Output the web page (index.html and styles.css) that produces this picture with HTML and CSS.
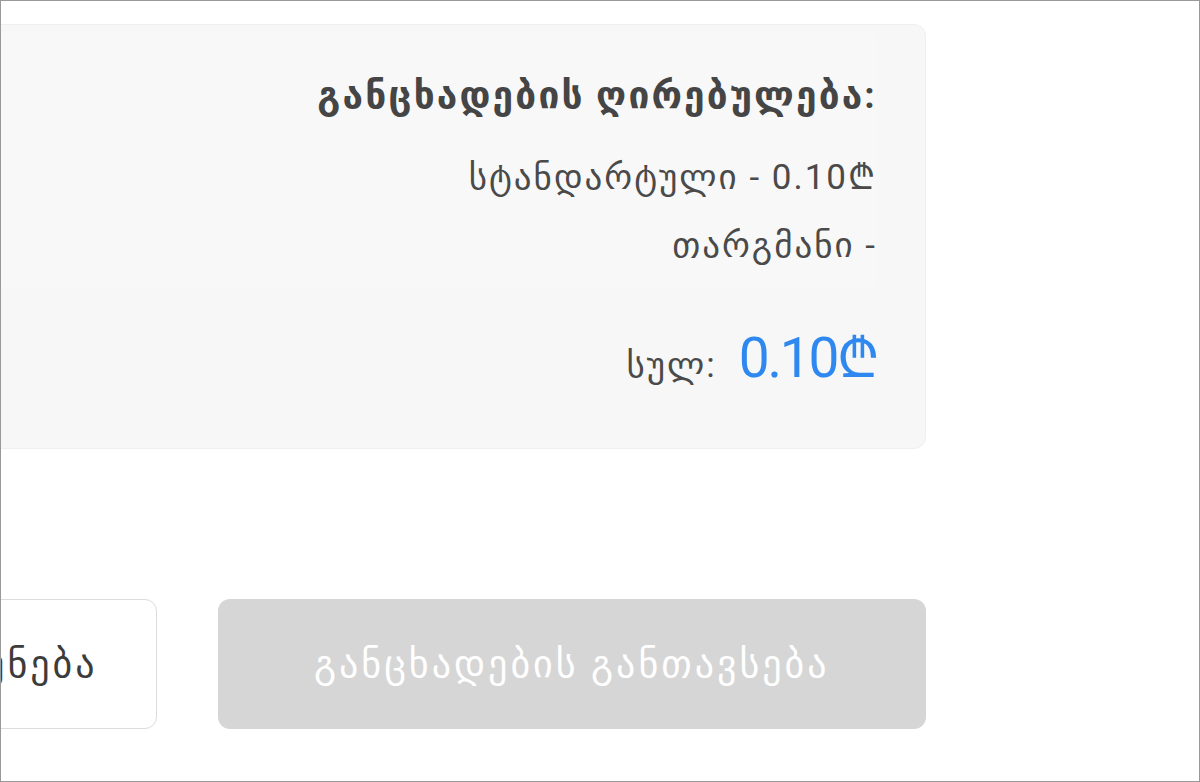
FILE: index.html
```html
<!DOCTYPE html>
<html lang="ka">
<head>
    <meta charset="UTF-8">
    <meta name="viewport" content="width=device-width, initial-scale=1">
    <title>განცხადების ღირებულება</title>
    <link rel="stylesheet" href="styles.css">
</head>
<body>
    <div class="frame">
        <div class="content">
            <div class="summary">
                <div class="breakdown">
                    <h2>განცხადების ღირებულება:</h2>
                    <p>სტანდარტული - 0.10₾</p>
                    <p>თარგმანი -</p>
                </div>
                <div class="total">
                    <span class="total-label">სულ:</span>
                    <span class="total-price">0.10₾</span>
                </div>
            </div>

            <div class="actions">
                <button class="btn btn-outline">დაბრუნება</button>
                <button class="btn btn-primary" disabled>განცხადების განთავსება</button>
            </div>
        </div>
    </div>
</body>
</html>
```

FILE: styles.css
```css
* {
    margin: 0;
    padding: 0;
    box-sizing: border-box;
}

body {
    font-family: Roboto, 'DejaVu Sans', sans-serif;
    background: #fff;
    color: #444;
}

.frame {
    width: 1200px;
    height: 782px;
    border: 1px solid #999;
    overflow: hidden;
}

.content {
    width: 1478px;
    margin-left: -553px;
    padding-top: 23px;
}

.summary {
    background: #f7f7f7;
    border: 1px solid #efefef;
    border-radius: 12px;
    padding: 8px 48px 50px 0;
}

.breakdown {
    background: #f8f8f8;
    text-align: right;
    padding: 29px 0 7px;
}

.breakdown h2 {
    font-size: 37px;
    font-weight: bold;
    line-height: 68px;
    letter-spacing: 2.2px;
    color: #454545;
    margin-bottom: 14px;
}

.breakdown p {
    font-size: 35px;
    line-height: 68px;
    letter-spacing: 2px;
    color: #4a4a4a;
}

.total {
    display: flex;
    justify-content: flex-end;
    align-items: baseline;
    gap: 22px;
    margin-top: 31px;
    height: 80px;
    line-height: 80px;
}

.total-label {
    font-size: 35px;
    letter-spacing: 2px;
    color: #4a4a4a;
}

.total-price {
    font-size: 55px;
    letter-spacing: -2.2px;
    color: #2f88f0;
}

.actions {
    display: grid;
    grid-template-columns: 1fr 1fr;
    gap: 61px;
    margin-top: 150px;
}

.btn {
    height: 130px;
    border-radius: 12px;
    font-family: inherit;
    font-size: 38px;
    letter-spacing: 3px;
}

.btn-outline {
    background: #fff;
    border: 1px solid #dcdcdc;
    color: #3c3c3c;
    text-align: right;
    padding-right: 58px;
}

.btn-primary {
    background: #d6d6d6;
    border: none;
    color: #fff;
}
```
